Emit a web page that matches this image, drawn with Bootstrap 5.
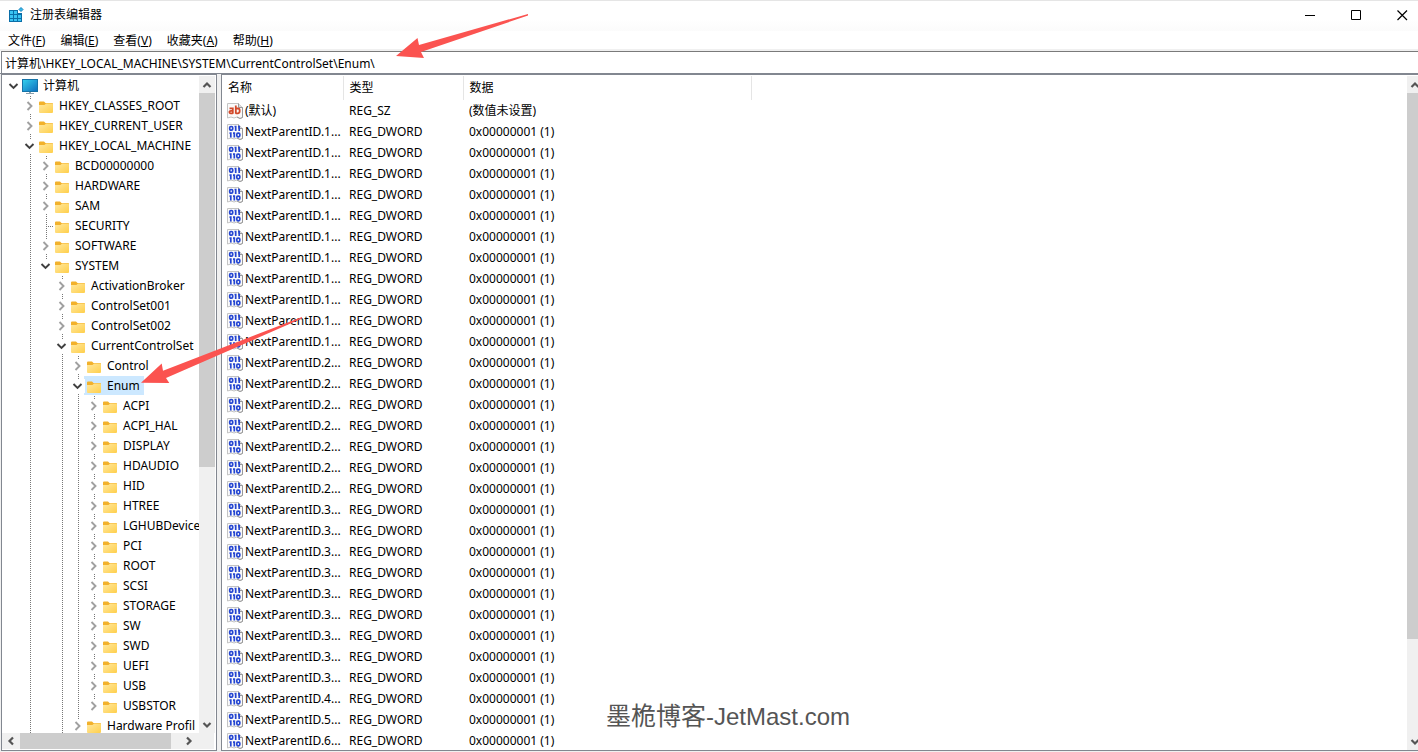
<!doctype html>
<html lang="zh-CN">
<head>
<meta charset="utf-8">
<meta name="viewport" content="width=device-width, initial-scale=1">
<title>注册表编辑器</title>
<link href="https://cdn.jsdelivr.net/npm/bootstrap@5.3.0/dist/css/bootstrap.min.css" rel="stylesheet">
<style>
  body { font: 12px/20px "Noto Sans", "Noto Sans CJK SC", sans-serif; color: #000; background: #fff; }
  button { font: inherit; color: inherit; background: none; border: 0; padding: 0; }
  svg { display: block; flex: none; }
  .titlebar { height: 31px; padding-left: 8px; padding-bottom: 2px; margin-right: -7px; border-top: 1px solid #e5e5e5; background: linear-gradient(#fff 60%, #fbfbfb); }
  .app-name { margin-left: 6px; }
  .caption-btn { width: 46px; height: 28px; display: flex; align-items: center; justify-content: center; }
  .menubar { height: 20px; gap: 15px; padding-left: 8px; border-bottom: 2px solid #f0f0f0; line-height: 20px; }
  .menubar u { text-underline-offset: 1px; }
  .address { height: 22px; font: inherit; border: 1px solid #828790; border-top-color: #7a7a7a; border-bottom: 0; padding: 0 3px; outline: 0; margin-left: 1px; border-right: 0; }
  .panes { background: #f0f0f0; gap: 4px; padding: 0 0 1px 1px; border-top: 1px solid #828790; }
  .pane { border: 1px solid #828790; background: #fff; }
  .tree-pane { width: 216px; padding: 1px 1px 1px 0; }
  .list-pane { border-right: 0; padding-top: 1px; }
  .tree { padding-left: 4px; }
  .tree li { height: 20px; white-space: nowrap; }
  .guide { width: 16px; flex: none; position: relative; display: flex; align-items: center; justify-content: center; }
  .guide.line { background: repeating-linear-gradient(#777 0 1px, transparent 1px 2px) 8px 0 / 1px 100% no-repeat; }
  .guide.last { background-size: 1px 3px; }
  .guide.leaf::after { content: ""; width: 8px; height: 1px; margin-left: 8px; background: repeating-linear-gradient(90deg, #777 0 1px, transparent 1px 2px); }
  .guide svg { background: #fff; }
  .node { padding: 0 4px 0 2px; gap: 5px; height: 19px; line-height: 19px; margin-left: -2px; }
  .node svg { margin-top: 2px; }
  .node.picked { background: #cce8ff; }
  .sb { background: #f0f0f0; flex: none; }
  .sb-v { width: 16px; }
  .sb-list { width: 11px; }
  .sb-h { height: 16px; margin-right: 1px; }
  .thumb { background: #cdcdcd; }
  .arrow-v { height: 17px; width: 16px; display: flex; align-items: center; justify-content: center; }
  .arrow-h { width: 18px; height: 16px; display: flex; align-items: center; justify-content: center; }
  .values { width: 529px; table-layout: fixed; }
  .values th { font-weight: 400; height: 24px; padding: 0 6px; border-right: 1px solid #e5e5e5; }
  .values td { height: 21px; line-height: 20px; padding: 0 6px; white-space: nowrap; }
  .values td:first-child { padding: 0 0 0 5px; }
  .values td div { gap: 2px; }
  .overlay { left: 0; top: 0; pointer-events: none; }
  .watermark { left: 606px; bottom: 17px; font: 24px/36px "Liberation Sans", "Noto Sans CJK SC", sans-serif; color: #555; white-space: nowrap; pointer-events: none; }
  .watermark span { font-size: 25px; }
</style>
</head>
<body class="vh-100 overflow-hidden d-flex flex-column position-relative">
<svg width="0" height="0" class="position-absolute" aria-hidden="true">
  <defs>
    <linearGradient id="fold" x2="1" y2="1"><stop stop-color="#ffe8a0"/><stop offset="1" stop-color="#ffcf4b"/></linearGradient>
    <linearGradient id="screen" x2="1" y2="1"><stop stop-color="#35d3ee"/><stop offset="1" stop-color="#0f6cbd"/></linearGradient>
    <symbol id="folder" viewBox="0 0 16 16"><path d="M1 3.500q0-1 1-1h4l1.500 1.500H14q1 0 1 1V8H1z" fill="#f2b12b"/><path d="M1 6h5.500l1.500-1.500H14q1 0 1 1V13q0 1-1 1H2q-1 0-1-1z" fill="url(#fold)"/></symbol>
    <symbol id="pc" viewBox="0 0 16 16"><rect x=".5" y=".5" width="15" height="12" fill="url(#screen)" stroke="#1673a8"/><path d="M7 13h2v1h3v1H4v-1h3z" fill="#8aa0ad"/></symbol>
    <symbol id="closed" viewBox="0 0 14 14"><path d="M4.500 3l4 4-4 4" fill="none" stroke="#a0a0a0" stroke-width="1.900"/></symbol>
    <symbol id="open" viewBox="0 0 14 14"><path d="M2.500 5l4 4 4-4" fill="none" stroke="#404040" stroke-width="1.900"/></symbol>
    <symbol id="page" viewBox="0 0 16 16"><path d="M.5.5h11l4 4v10l-2.500 1-3-1.500-3 1-3-1-3.500 1z" fill="#fafafa" stroke="#c4c4c4"/><path d="M11.500.5v4h4" fill="#ddd" stroke="#999"/><path d="M15.500 4.500v10l-2.500 1-3-1.500" fill="none" stroke="#999"/></symbol>
    <symbol id="sz" viewBox="0 0 16 16"><use href="#page"/><g fill="none" stroke="#d2492a" stroke-width="1.800"><path d="M2.500 5.300h3.300v5.500M5.800 7.800H4Q2.400 7.800 2.400 9.100T4 10.300H5.800"/><path d="M8.800 2.500v8.300M8.800 5.500H11Q12.700 5.500 12.700 7.800T11 10.300H8.800"/></g></symbol>
    <symbol id="dw" viewBox="0 0 16 16"><use href="#page"/><g fill="none" stroke="#2546d2" stroke-width="1.700"><rect x="2.700" y="2.500" width="3" height="3.700" rx="1.200"/><path d="M8.700 1.700v5.300M12.200 1.700v5.300M7.500 2.500h1M11 2.500h1M3.800 8.300v5.300M7.300 8.300v5.300M2.500 9.100h1M6 9.100h1"/><rect x="9.800" y="9.100" width="3" height="3.700" rx="1.200"/></g></symbol>
    <symbol id="up" viewBox="0 0 10 10"><path d="M1.500 7L5 3.500 8.500 7" fill="none" stroke="#555" stroke-width="2.200"/></symbol>
  </defs>
</svg>

<header class="titlebar d-flex align-items-center flex-shrink-0">
  <svg width="16" height="16" viewBox="0 0 16 16" aria-hidden="true"><path d="M1 3h9v3h4v9H1z" fill="#0a6ea8"/><path fill="#39c3f2" d="M2 4h3v3H2zM6 4h3v3H6zM2 8h3v3H2zM6 8h3v3H6zM10 8h3v3h-3zM2 12h3v2H2zM6 12h3v2H6zM10 12h3v2h-3z"/><path d="M13 .5l2 2-2 2-2-2z" fill="#35b8ea" stroke="#1583bd"/></svg>
  <span class="app-name me-auto">注册表编辑器</span>
  <button class="caption-btn" aria-label="最小化"><svg width="11" height="11"><path d="M0 5.500h10" stroke="#000"/></svg></button>
  <button class="caption-btn" aria-label="最大化"><svg width="11" height="11"><path d="M.5.5h9v9h-9z" fill="none" stroke="#000"/></svg></button>
  <button class="caption-btn" aria-label="关闭"><svg width="11" height="11"><path d="M.5.5l9.500 9.500M10 .5L.5 10" stroke="#000" stroke-width="1.200"/></svg></button>
</header>

<nav class="menubar d-flex flex-shrink-0" aria-label="菜单">
  <button>文件(<u>F</u>)</button><button>编辑(<u>E</u>)</button><button>查看(<u>V</u>)</button><button>收藏夹(<u>A</u>)</button><button>帮助(<u>H</u>)</button>
</nav>

<input class="address flex-shrink-0" aria-label="地址" value="计算机\HKEY_LOCAL_MACHINE\SYSTEM\CurrentControlSet\Enum\">

<main class="panes d-flex flex-grow-1 overflow-hidden">
  <section class="pane tree-pane d-flex flex-column flex-shrink-0">
    <div class="d-flex flex-grow-1 overflow-hidden">
      <ul class="tree list-unstyled mb-0 flex-grow-1 overflow-hidden" id="tree"></ul>
      <div class="sb sb-v d-flex flex-column">
        <span class="arrow-v"><svg width="10" height="10"><use href="#up"/></svg></span>
        <div class="thumb" style="height:57%"></div>
        <span class="arrow-v mt-auto"><svg width="10" height="10"><use href="#up" transform="rotate(180 5 5)"/></svg></span>
      </div>
    </div>
    <div class="sb sb-h d-flex">
      <span class="arrow-h"><svg width="10" height="10"><use href="#up" transform="rotate(-90 5 5)"/></svg></span>
      <div class="thumb" style="width:71%"></div>
      <span class="arrow-h ms-auto me-3"><svg width="10" height="10"><use href="#up" transform="rotate(90 5 5)"/></svg></span>
    </div>
  </section>
  <section class="pane list-pane d-flex flex-grow-1 overflow-hidden">
    <div class="flex-grow-1 overflow-hidden">
      <table class="values">
        <colgroup><col style="width:121px"><col style="width:120px"><col style="width:288px"></colgroup>
        <thead><tr><th>名称</th><th>类型</th><th>数据</th></tr></thead>
        <tbody id="values"></tbody>
      </table>
    </div>
    <div class="sb sb-list d-flex flex-column overflow-hidden">
      <span class="arrow-v"><svg width="10" height="10"><use href="#up"/></svg></span>
      <div class="thumb" style="height:81%"></div>
      <span class="arrow-v mt-auto"><svg width="10" height="10"><use href="#up" transform="rotate(180 5 5)"/></svg></span>
    </div>
  </section>
</main>

<div class="watermark position-absolute"><span>墨桅博客</span>-JetMast.com</div>
<svg class="overlay position-absolute" width="540" height="390" fill="#fb5350" aria-hidden="true">
  <path d="M396 56L417.500 38 419 45 528 14v1.500L421 52l3 6z"/>
  <path d="M141 382.700L161.700 363.500 163 370.700 302 317v1.500L166 378l3.300 5z"/>
</svg>

<script src="https://cdn.jsdelivr.net/npm/bootstrap@5.3.0/dist/js/bootstrap.bundle.min.js"></script>
<script>
  // [depth, name, state]: "+" collapsed, "-" expanded, "." no children
  const keys = [
    [0, '计算机', '-'], [1, 'HKEY_CLASSES_ROOT', '+'], [1, 'HKEY_CURRENT_USER', '+'], [1, 'HKEY_LOCAL_MACHINE', '-'],
    [2, 'BCD00000000', '+'], [2, 'HARDWARE', '+'], [2, 'SAM', '+'], [2, 'SECURITY', '.'], [2, 'SOFTWARE', '+'], [2, 'SYSTEM', '-'],
    [3, 'ActivationBroker', '+'], [3, 'ControlSet001', '+'], [3, 'ControlSet002', '+'], [3, 'CurrentControlSet', '-'],
    [4, 'Control', '+'], [4, 'Enum', '-'],
    ...['ACPI', 'ACPI_HAL', 'DISPLAY', 'HDAUDIO', 'HID', 'HTREE', 'LGHUBDevice', 'PCI', 'ROOT', 'SCSI', 'STORAGE', 'SW', 'SWD', 'UEFI', 'USB', 'USBSTOR'].map(n => [5, n, '+']),
    [4, 'Hardware Profil', '+']
  ];
  const lastKeys = ['SYSTEM', 'USBSTOR'];
  const openDepths = [1, 3, 4];
  document.getElementById('tree').innerHTML = keys.map(([depth, name, state]) => {
    let cells = '';
    for (let d = 0; d < depth; d++)
      cells += `<span class="guide ${openDepths.includes(d) ? 'line' : ''}"></span>`;
    const line = depth ? 'line' : '', last = lastKeys.includes(name) ? 'last' : '';
    cells += state === '.'
      ? '<span class="guide line leaf"></span>'
      : `<button class="guide ${line} ${last}" aria-label="${name}"><svg width="14" height="14"><use href="#${state === '-' ? 'open' : 'closed'}"/></svg></button>`;
    return `<li class="d-flex">${cells}<span class="node d-flex align-items-center ${name === 'Enum' ? 'picked' : ''}"><svg width="16" height="16"><use href="#${depth ? 'folder' : 'pc'}"/></svg>${name}</span></li>`;
  }).join('');

  const counts = { 1: 11, 2: 7, 3: 9, 4: 1, 5: 1, 6: 1 };
  const rows = [['sz', '(默认)', 'REG_SZ', '(数值未设置)']];
  for (const [digit, n] of Object.entries(counts))
    for (let i = 0; i < n; i++) rows.push(['dw', `NextParentID.${digit}...`, 'REG_DWORD', '0x00000001 (1)']);
  document.getElementById('values').innerHTML = rows.map(([icon, name, type, data]) =>
    `<tr><td><div class="d-flex align-items-center"><svg width="16" height="16"><use href="#${icon}"/></svg>${name}</div></td><td>${type}</td><td>${data}</td></tr>`).join('');
</script>
</body>
</html>
